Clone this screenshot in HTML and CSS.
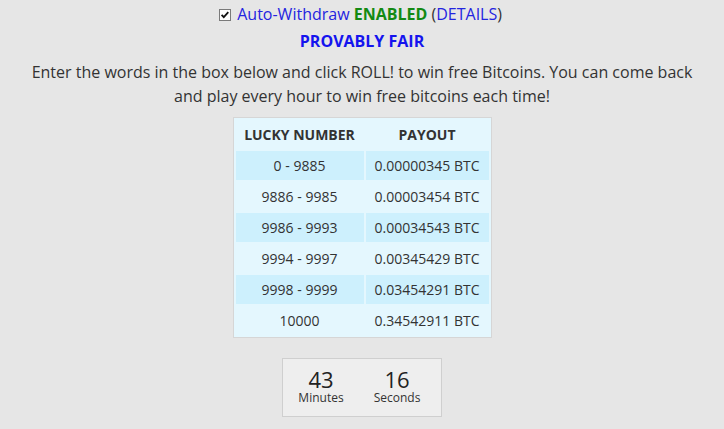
FILE: index.html
```html
<!DOCTYPE html>
<html>
<head>
<meta charset="utf-8">
<link rel="stylesheet" href="styles.css">
</head>
<body>
<div class="page">
  <div class="auto">
    <span class="check"><svg width="12" height="12" viewBox="0 0 12 12"><rect x="0.5" y="0.5" width="11" height="11" fill="#fff" stroke="#7a7a7a"/><path d="M2.6 5.8 L4.8 8.2 L9.3 3.2" fill="none" stroke="#111" stroke-width="1.8"/></svg></span>
    <a class="link">Auto-Withdraw</a> <span class="enabled">ENABLED</span> (<a class="link">DETAILS</a>)
  </div>
  <div class="fair">PROVABLY FAIR</div>
  <p class="intro">Enter the words in the box below and click ROLL! to win free Bitcoins. You can come back and play every hour to win free bitcoins each time!</p>
  <table class="payout">
    <thead>
      <tr><th>LUCKY NUMBER</th><th>PAYOUT</th></tr>
    </thead>
    <tbody>
      <tr class="shade"><td>0 - 9885</td><td>0.00000345 BTC</td></tr>
      <tr><td>9886 - 9985</td><td>0.00003454 BTC</td></tr>
      <tr class="shade"><td>9986 - 9993</td><td>0.00034543 BTC</td></tr>
      <tr><td>9994 - 9997</td><td>0.00345429 BTC</td></tr>
      <tr class="shade"><td>9998 - 9999</td><td>0.03454291 BTC</td></tr>
      <tr><td>10000</td><td>0.34542911 BTC</td></tr>
    </tbody>
  </table>
  <div class="countdown">
    <div class="section"><span class="amount">43</span><span class="unit">Minutes</span></div>
    <div class="section"><span class="amount">16</span><span class="unit">Seconds</span></div>
  </div>
</div>
</body>
</html>
```
FILE: styles.css
```css
html, body {
  margin: 0;
  padding: 0;
  background: #e6e6e6;
}
body {
  font-family: "Open Sans", "DejaVu Sans", sans-serif;
  font-size: 16px;
  color: #333;
}
.page {
  display: flex;
  flex-direction: column;
  align-items: center;
  text-align: center;
  padding-top: 2px;
}
.auto {
  line-height: 24px;
  height: 24px;
  margin-left: -3px;
}
.check {
  display: inline-block;
  width: 12px;
  height: 12px;
  vertical-align: -1px;
  margin-right: 2px;
}
.check svg { display: block; }
.link {
  color: #2424e0;
  text-decoration: none;
}
.enabled {
  color: #138a13;
  font-weight: bold;
}
.fair {
  margin-top: 3px;
  line-height: 24px;
  font-weight: bold;
  color: #1414ee;
}
.intro {
  margin: 7px 0 0;
  width: 690px;
  line-height: 24px;
}
.payout {
  margin-top: 9px;
  border: 1px solid #d6d6d6;
  background: #e4f7fe;
  border-spacing: 2px;
  font-size: 14px;
  color: #333;
}
.payout th {
  font-size: 14px;
  font-weight: bold;
  height: 29px;
  padding: 0;
  width: 128px;
}
.payout th + th { width: 123px; }
.payout td {
  height: 29px;
  padding: 0;
}
.payout tr.shade td {
  background: #cdf0fd;
}
.countdown {
  margin-top: 20px;
  display: flex;
  border: 1px solid #cfcfcf;
  background: #eeeeee;
  height: 57px;
  padding-right: 6px;
  box-sizing: content-box;
}
.section {
  width: 76px;
  display: flex;
  flex-direction: column;
  align-items: center;
  padding-top: 9px;
}
.amount {
  font-size: 22px;
  line-height: 22px;
  color: #222;
}
.unit {
  font-size: 12px;
  line-height: 15px;
  color: #333;
}
```
